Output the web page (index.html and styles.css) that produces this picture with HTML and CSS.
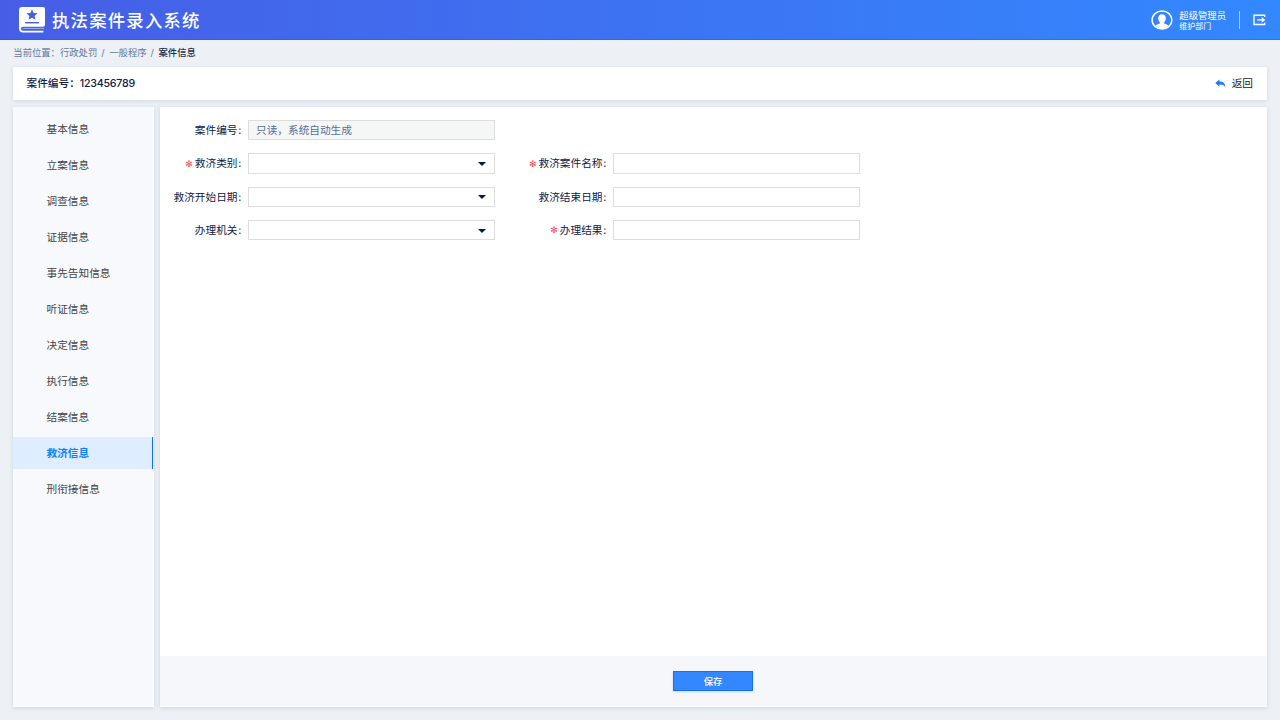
FILE: index.html
```html
<!DOCTYPE html>
<html lang="zh-CN">
<head>
<meta charset="utf-8">
<title>执法案件录入系统</title>
<link rel="stylesheet" href="styles.css">
</head>
<body>
<header class="header">
  <svg class="logo" width="27" height="28" viewBox="0 0 27 28">
    <path d="M3 1H24Q26 1 26 3V18.8Q26 20.8 24 20.8H4A2 2 0 0 0 4 24.8H24.4V26.6H4.2Q0 26.6 0 22.5V4Q0 1 3 1Z" fill="#fff"/>
    <path d="M3.8 22.4H25" stroke="#fff" stroke-width=".9" opacity=".55"/>
    <path d="M13 3.3l1.6 3.6 3.9.4-2.9 2.6.8 3.9-3.4-2-3.4 2 .8-3.9-2.9-2.6 3.9-.4z" fill="#4560e6"/>
    <path d="M6 16.7H20" stroke="#4560e6" stroke-width="1.4"/>
  </svg>
  <h1 class="title">执法案件录入系统</h1>
  <div class="user">
    <svg width="22" height="20" viewBox="0 0 22 20">
      <ellipse cx="11" cy="10" rx="9.9" ry="9" fill="none" stroke="#fff" stroke-width="1.5"/>
      <path d="M11 4.2c2.6 0 3.8 1.7 3.8 4 0 1.7-.7 3.1-1.6 4v1.2c1.8.6 3.5 1.1 4.2 2.3Q14.5 18.6 11 18.6T4.6 15.7c.7-1.2 2.4-1.7 4.2-2.3v-1.2c-.9-.9-1.6-2.3-1.6-4 0-2.3 1.2-4 3.8-4z" fill="#fff"/>
    </svg>
    <div class="user-text"><div class="user-name">超级管理员</div><div class="user-dept">维护部门</div></div>
  </div>
  <span class="divider"></span>
  <svg class="logout" width="13" height="12" viewBox="0 0 13 12">
    <path d="M11.7 3V1.2H1V10.5H11.7V8.8" fill="none" stroke="#fff" stroke-width="1.4"/>
    <path d="M4.3 5.9H10" stroke="#fff" stroke-width="1.3"/>
    <path d="M8.7 3.1L12.2 5.9L8.7 8.7Z" fill="#fff"/>
  </svg>
</header>
<nav class="crumbs"><span>当前位置：</span><span>行政处罚</span><i>/</i><span>一般程序</span><i>/</i><b>案件信息</b></nav>
<section class="casebar">
  <strong>案件编号：<span class="num">123456789</span></strong>
  <a class="back"><svg width="11" height="9" viewBox="0 0 11 9"><path d="M4.4.4V2.5C8 2.5 10.2 4.2 10.3 8.2 9 6.2 7.4 5.5 4.4 5.6V7.7L.3 4z" fill="#1f7cfa"/></svg>返回</a>
</section>
<main class="main">
  <ul class="menu">
    <li>基本信息</li><li>立案信息</li><li>调查信息</li><li>证据信息</li><li>事先告知信息</li><li>听证信息</li><li>决定信息</li><li>执行信息</li><li>结案信息</li><li class="active">救济信息</li><li>刑衔接信息</li>
  </ul>
  <section class="panel">
    <form class="form">
      <div class="label">案件编号<em>:</em></div><div class="field readonly">只读，系统自动生成</div><div class="gap"></div><div class="gap"></div>
      <div class="label required">救济类别<em>:</em></div><div class="field select"></div>
      <div class="label required">救济案件名称<em>:</em></div><div class="field"></div>
      <div class="label">救济开始日期<em>:</em></div><div class="field select"></div>
      <div class="label">救济结束日期<em>:</em></div><div class="field"></div>
      <div class="label">办理机关<em>:</em></div><div class="field select"></div>
      <div class="label required">办理结果<em>:</em></div><div class="field"></div>
    </form>
    <footer class="actions"><button class="save">保存</button></footer>
  </section>
</main>
</body>
</html>
```
FILE: styles.css
```css
* { box-sizing: border-box; }
body {
  margin: 0;
  width: 1280px;
  height: 720px;
  overflow: hidden;
  display: flex;
  flex-direction: column;
  background: #edf1f5;
  color: #0f2048;
  font: 10.67px/16px "Inter", "Noto Sans CJK SC", sans-serif;
}
.header {
  height: 40px;
  flex: none;
  display: flex;
  align-items: center;
  padding: 0 14px 0 19px;
  background: linear-gradient(90deg, #465ee5, #3388ff);
  box-shadow: inset 0 -1px rgba(20, 90, 240, .4);
  color: #fff;
}
.title {
  margin: 2px 0 0 6px;
  font-size: 17.33px;
  line-height: 24px;
  font-weight: 500;
  letter-spacing: 1.25px;
}
.user { display: flex; align-items: center; gap: 6px; margin-left: auto; }
.user-text { padding-top: 1px; }
.user-name { font-size: 9.33px; line-height: 12px; }
.user-dept { font-size: 8px; line-height: 9px; }
.divider { width: 1px; height: 18px; margin: 0 13px; background: rgba(255, 255, 255, .6); }
.crumbs {
  height: 27px;
  flex: none;
  padding-left: 13.3px;
  font-size: 9.33px;
  line-height: 26px;
  color: #63779d;
}
.crumbs i { font-style: normal; margin: 0 4.6px 0 4px; }
.crumbs b { font-weight: 500; color: #1b2b50; }
.casebar {
  height: 33px;
  flex: none;
  margin: 0 13px;
  padding: 0 14px 0 13.5px;
  display: flex;
  align-items: center;
  justify-content: space-between;
  background: #fff;
  border-radius: 1px;
  box-shadow: 0 1px 4px rgba(120, 145, 175, .28);
}
.casebar strong { font-weight: 500; }
.num { letter-spacing: -.24px; }
.back { display: flex; align-items: center; gap: 6px; color: #222; }
.main { height: 600px; flex: none; display: flex; gap: 6px; margin: 7px 13px 0; }
.menu {
  width: 141px;
  margin: 0;
  padding: 6px 0;
  list-style: none;
  display: flex;
  flex-direction: column;
  gap: 4px;
  background: #f8f9fc;
  border: solid #fff;
  border-width: 0 1px 1px 0;
  box-shadow: 0 1px 4px rgba(120, 145, 175, .32);
  color: #444;
}
.menu li { height: 32px; line-height: 34px; padding-left: 33.5px; }
.menu .active {
  background: #deedff;
  border-right: 1px solid #0a6cff;
  color: #0c80ff;
  font-weight: 700;
}
.panel {
  flex: 1;
  display: flex;
  flex-direction: column;
  background: #fff;
  box-shadow: 0 1px 4px rgba(120, 145, 175, .32);
}
.form {
  flex: 1;
  padding-top: 13px;
  display: grid;
  grid-template-columns: 82px 247px 106px 247px;
  grid-auto-rows: 20.2px;
  column-gap: 6px;
  row-gap: 13.15px;
  align-content: start;
}
.label { text-align: right; line-height: 22px; white-space: nowrap; }
.label em { font-style: normal; display: inline-block; width: 4.5px; text-align: center; }
.required::before { content: "✻"; color: #ff4256; font: 9px/1 "DejaVu Sans", sans-serif; margin-right: 2px; vertical-align: 0.5px; }
.field { border: 1px solid #ddd; display: flex; align-items: center; }
.readonly { background: #f5f7f7; padding: 1px 0 0 7px; color: #586b96; }
.select { justify-content: flex-end; padding: 1px 8px 0 0; }
.select::after {
  content: "";
  border: solid transparent;
  border-width: 4.9px 4.9px 0;
  border-top-color: #071845;
}
.actions {
  height: 51px;
  padding-right: 1px;
  display: flex;
  justify-content: center;
  align-items: center;
  background: #f5f7fa;
  border-bottom: 1px solid #fff;
}
.save {
  width: 80px;
  height: 20px;
  padding: 0;
  border: 1px solid #126fff;
  background: #3388ff;
  color: #fff;
  font: 500 9.33px/17px "Noto Sans CJK SC", sans-serif;
  box-shadow: 0 1px 2px rgba(60, 120, 220, .2);
}
```
